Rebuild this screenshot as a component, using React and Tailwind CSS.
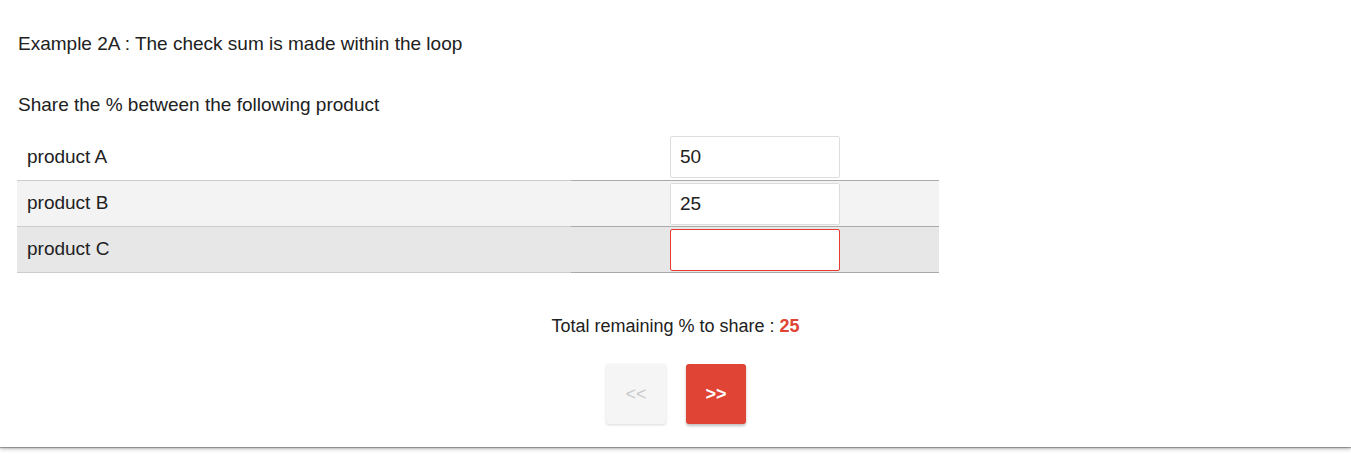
import React, { useState } from "react";

const products = [
  { name: "product A", value: "50", bg: "bg-white" },
  { name: "product B", value: "25", bg: "bg-[#f3f3f3]" },
  { name: "product C", value: "", bg: "bg-[#e7e7e7]" },
];

const App = () => {
  const [values, setValues] = useState(products.map((p) => p.value));

  const remaining =
    100 - values.reduce((sum, v) => sum + (parseInt(v, 10) || 0), 0);

  return (
    <div className="font-['Liberation_Sans',Arial,sans-serif] text-[#212121] bg-white pb-[7px]">
      <div className="h-[447px] bg-white shadow-[0_1px_1px_rgba(0,0,0,0.3),0_2px_4px_rgba(0,0,0,0.25)] px-[17px] pt-[33px]">
        <p className="text-[19px] leading-[22px] ml-px">
          Example 2A : The check sum is made within the loop
        </p>
        <p className="text-[19px] leading-[22px] ml-px mt-[39px]">
          Share the % between the following product
        </p>

        {/* Product table */}
        <div className="w-[922px] mt-[18px]">
          {products.map((p, i) => (
            <div key={p.name} className={`flex h-[46px] ${p.bg}`}>
              <div
                className={`w-[554px] flex items-center pl-[10px] text-[19px] ${
                  i === 0 ? "" : "border-t border-[#cccccc]"
                }`}
              >
                {p.name}
              </div>
              <div
                className={`flex-1 flex items-center justify-center ${
                  i === 0 ? "" : "border-t border-[#aaaaaa]"
                }`}
              >
                <input
                  type="text"
                  autoFocus={i === 2}
                  value={values[i]}
                  onChange={(e) => {
                    const next = [...values];
                    next[i] = e.target.value;
                    setValues(next);
                  }}
                  className={`w-[170px] h-[42px] bg-white rounded-[2px] px-[9px] text-[19px] outline-none border caret-black ${
                    i === 2 ? "border-[#e53e30]" : "border-[#dddddd]"
                  }`}
                />
              </div>
            </div>
          ))}
          <div className="flex">
            <div className="w-[554px] border-t border-[#cccccc]" />
            <div className="flex-1 border-t border-[#aaaaaa]" />
          </div>
        </div>

        {/* Remaining */}
        <p className="text-center text-[18px] leading-[22px] mt-[42px]">
          Total remaining % to share :{" "}
          <span className="font-bold text-[#e04434]">{remaining}</span>
        </p>

        <div className="flex justify-center gap-[20px] mt-[27px] ml-px">
          <button className="w-[60px] h-[60px] rounded-[3px] bg-[#f5f5f5] text-[#c8c8c8] text-[18px] shadow-[0_1px_3px_rgba(0,0,0,0.15)]">
            &lt;&lt;
          </button>
          <button className="w-[60px] h-[60px] rounded-[3px] bg-[#e04434] text-white font-bold text-[18px] shadow-[0_2px_3px_rgba(0,0,0,0.25)]">
            &gt;&gt;
          </button>
        </div>
      </div>
    </div>
  );
};

export default App;
